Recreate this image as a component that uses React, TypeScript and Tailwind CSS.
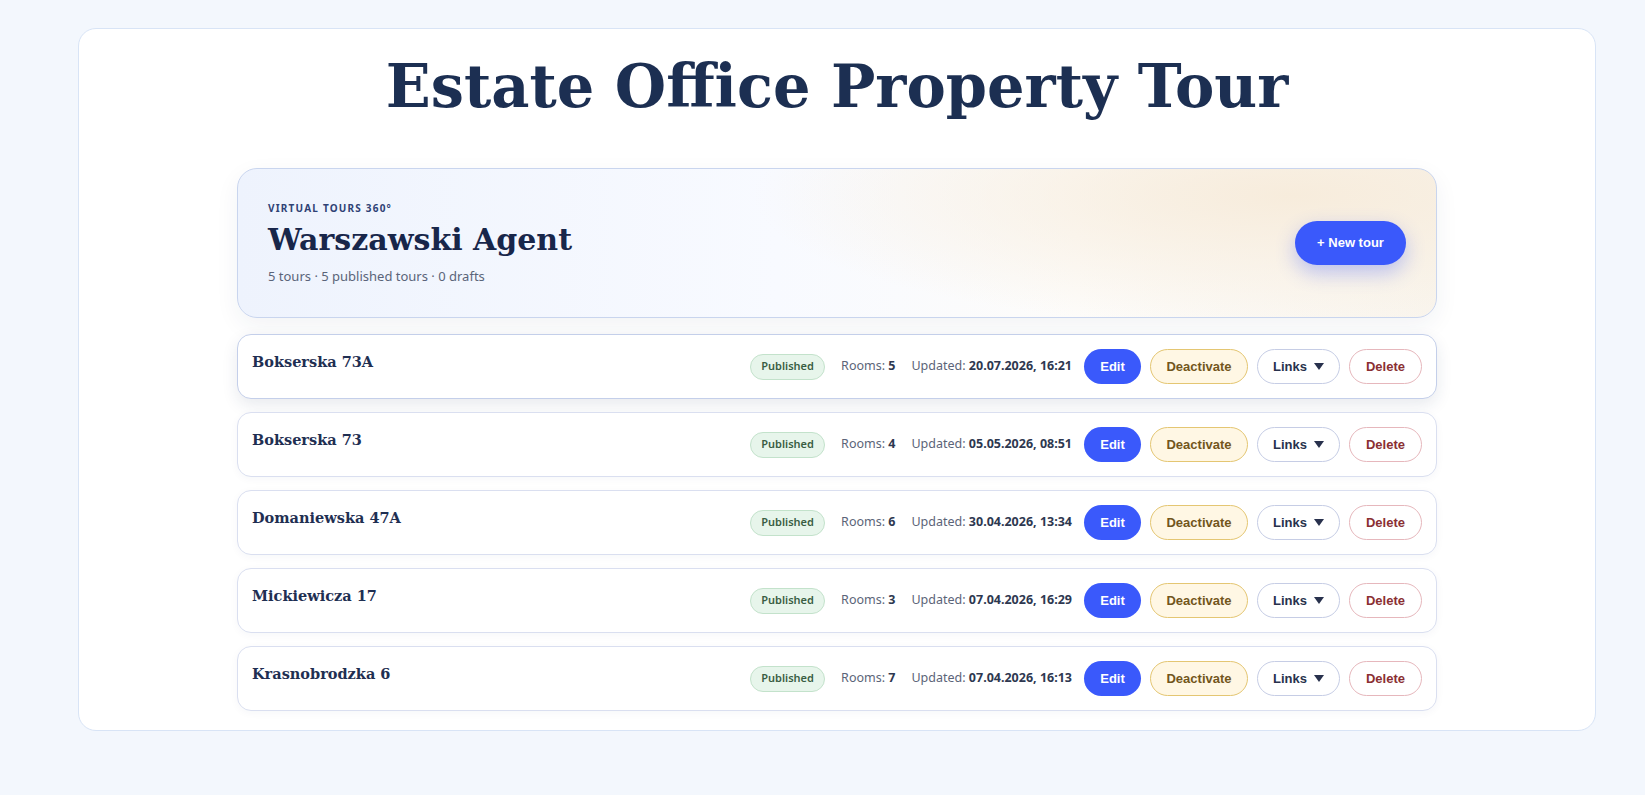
type Tour = {
  name: string;
  rooms: number;
  updated: string;
};

const tours: Tour[] = [
  { name: "Bokserska 73A", rooms: 5, updated: "20.07.2026, 16:21" },
  { name: "Bokserska 73", rooms: 4, updated: "05.05.2026, 08:51" },
  { name: "Domaniewska 47A", rooms: 6, updated: "30.04.2026, 13:34" },
  { name: "Mickiewicza 17", rooms: 3, updated: "07.04.2026, 16:29" },
  { name: "Krasnobrodzka 6", rooms: 7, updated: "07.04.2026, 16:13" },
];

const serif = "font-['Georgia','DejaVu_Serif',serif]";
const sans = "font-['Noto_Sans','Open_Sans',sans-serif]";
const btn = "font-['Liberation_Sans','Arial',sans-serif]";

function TourRow({ tour, active }: { tour: Tour; active?: boolean }) {
  return (
    <div
      className={`flex h-[65px] items-center justify-between rounded-[14px] border bg-white pl-[14px] pr-[14px] ${
        active
          ? "border-[#c4cfea] shadow-[0_6px_16px_rgba(30,45,90,0.10)]"
          : "border-[#dadff0] shadow-[0_2px_8px_rgba(30,45,90,0.04)]"
      }`}
    >
      <div className={`self-start pt-[17px] text-[14.5px] font-bold leading-[20px] text-[#1f2f52] ${serif}`}>
        {tour.name}
      </div>
      <div className="flex items-center">
        <span
          className={`flex h-[26px] w-[75px] items-center justify-center rounded-full border border-[#c3e2cb] bg-[#e7f5eb] text-[11px] font-semibold text-[#3a5e44] ${sans}`}
        >
          Published
        </span>
        <span className={`ml-[16px] text-[12.5px] text-[#5b6478] ${sans}`}>
          Rooms: <b className="font-bold text-[#2e3850]">{tour.rooms}</b>
        </span>
        <span className={`ml-[16px] text-[12.5px] text-[#5b6478] ${sans}`}>
          Updated: <b className="font-bold text-[#2e3850]">{tour.updated}</b>
        </span>
        <div className={`ml-[12px] flex items-center gap-[9px] text-[13px] font-bold ${btn}`}>
          <button className="h-[35px] w-[57px] rounded-full bg-[#3a59fb] text-white">Edit</button>
          <button className="h-[35px] w-[98px] rounded-full border border-[#e4c672] bg-[#fff7e4] text-[#72561c]">
            Deactivate
          </button>
          <button className="flex h-[35px] w-[83px] items-center justify-center gap-[7px] rounded-full border border-[#c6cde5] bg-white text-[#28314d]">
            Links
            <svg width="10" height="7" viewBox="0 0 10 7">
              <polygon points="0,0 10,0 5,7" fill="#28314d" />
            </svg>
          </button>
          <button className="h-[35px] w-[73px] rounded-full border border-[#e6b7bc] bg-white text-[#8a2f33]">
            Delete
          </button>
        </div>
      </div>
    </div>
  );
}

export default function App() {
  return (
    <div className="min-h-screen bg-[#f3f7fd] pt-[28px]">
      <div className="ml-[78px] w-[1518px] rounded-[18px] border border-[#d8e4f6] bg-white pb-[19px] pt-[26px]">
        <h1
          className={`text-center text-[59px] font-bold leading-[64px] text-[#1c2f52] ${serif}`}
        >
          Estate Office Property Tour
        </h1>

        <div className="mx-auto mt-[49px] w-[1200px]">
          <div className="flex h-[150px] items-center justify-between rounded-[20px] border border-[#c9d5ee] bg-[radial-gradient(ellipse_45%_90%_at_88%_18%,#f7ecdc_0%,rgba(250,246,240,0)_100%),linear-gradient(90deg,#eef3fd_0%,#f8faff_45%,#fdfcfa_70%,#f9f5ee_100%)] pl-[30px] pr-[30px] shadow-[0_8px_24px_rgba(30,45,90,0.06)]">
            <div className="pt-[1px]">
              <div
                className={`text-[10px] font-bold uppercase leading-[14px] tracking-[0.12em] text-[#2f4275] ${sans}`}
              >
                Virtual tours 360°
              </div>
              <div
                className={`mt-[6px] text-[30px] font-bold leading-[38px] text-[#18264a] ${serif}`}
              >
                Warszawski Agent
              </div>
              <div className={`mt-[8px] text-[13px] text-[#5a6479] ${sans}`}>
                5 tours · 5 published tours · 0 drafts
              </div>
            </div>
            <button
              className={`h-[44px] w-[111px] rounded-full bg-[#3a59fb] text-[13px] font-bold text-white shadow-[0_8px_20px_rgba(58,89,251,0.32)] ${btn}`}
            >
              + New tour
            </button>
          </div>

          <div className="mt-[16px] flex flex-col gap-[13px]">
            {tours.map((t, i) => (
              <TourRow key={t.name} tour={t} active={i === 0} />
            ))}
          </div>
        </div>
      </div>
    </div>
  );
}
